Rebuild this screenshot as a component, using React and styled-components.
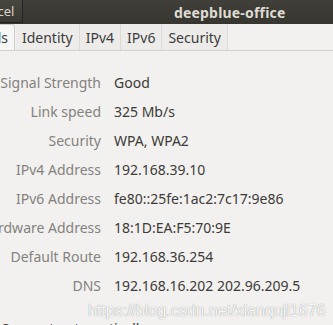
import React from 'react'
import styled, { createGlobalStyle } from 'styled-components'

const GlobalStyle = createGlobalStyle`
  html, body {
    margin: 0;
    padding: 0;
    background: #f2f1f0;
    overflow: hidden;
  }
`

const Window = styled.div`
  position: relative;
  width: 333px;
  height: 325px;
  overflow: hidden;
  background: #f2f1f0;
  font-family: "Noto Sans", "DejaVu Sans", sans-serif;
`

const TitleBar = styled.div`
  height: 24px;
  display: flex;
  align-items: stretch;
  background: linear-gradient(#403f3a, #36352f);
  color: #dfdbd2;
`

const CancelButton = styled.div`
  margin-left: -41px;
  margin-bottom: 1px;
  padding: 0 8px 0 14px;
  display: flex;
  align-items: center;
  border: 1px solid #24231f;
  border-top: 0;
  border-radius: 0 0 3px 3px;
  background: linear-gradient(#48473f, #3a3934);
  font-size: 13px;
  color: #d8d4cc;
`

const Title = styled.div`
  flex: 1;
  display: flex;
  align-items: center;
  justify-content: center;
  padding-left: 103px;
  font-weight: 700;
  font-size: 14px;
  letter-spacing: 0.2px;
`

const TabBar = styled.div`
  height: 26px;
  display: flex;
  border-bottom: 1px solid #d3d1cd;
`

const Tab = styled.div`
  display: flex;
  align-items: center;
  padding: 0 6px;
  font-size: 14px;
  color: #3c3c3c;
  background: ${p => (p.$active ? '#f7f7f6' : '#edecea')};
  border-right: 1px solid #dcdad6;
  ${p => p.$active && `
    border: 1px solid #cfcdc9;
    border-bottom: 0;
    border-radius: 0 3px 0 0;
    margin-right: 1px;
  `}
`

const ClippedTab = styled(Tab)`
  margin-left: -44px;
`

const InfoGrid = styled.div`
  display: grid;
  grid-template-columns: 101px 1fr;
  column-gap: 13px;
  grid-auto-rows: 29px;
  padding-top: 22px;
  font-size: 14px;
`

const Label = styled.div`
  justify-self: end;
  white-space: nowrap;
  color: #84827d;
`

const Value = styled.div`
  white-space: nowrap;
  color: #3c3b37;
`

const Footer = styled.div`
  margin-top: 14px;
  font-size: 14px;
  color: #3c3b37;
  white-space: nowrap;
`

const Watermark = styled.div`
  position: absolute;
  left: 88px;
  top: 302px;
  font-family: "Liberation Sans", Arial, sans-serif;
  font-size: 16px;
  color: rgba(255, 255, 255, 0.95);
  text-shadow: 0 0 1px rgba(100, 100, 100, 0.8);
  white-space: nowrap;
`

const rows = [
  ['Signal Strength', 'Good'],
  ['Link speed', '325 Mb/s'],
  ['Security', 'WPA, WPA2'],
  ['IPv4 Address', '192.168.39.10'],
  ['IPv6 Address', 'fe80::25fe:1ac2:7c17:9e86'],
  ['Hardware Address', '18:1D:EA:F5:70:9E'],
  ['Default Route', '192.168.36.254'],
  ['DNS', '192.168.16.202 202.96.209.5'],
]

const tabs = ['Identity', 'IPv4', 'IPv6', 'Security']

export default function App() {
  return (
    <Window>
      <GlobalStyle />
      <TitleBar>
        <CancelButton>Cancel</CancelButton>
        <Title>deepblue-office</Title>
      </TitleBar>
      <TabBar>
        <ClippedTab $active>Details</ClippedTab>
        {tabs.map(t => (
          <Tab key={t}>{t}</Tab>
        ))}
      </TabBar>
      <InfoGrid>
        {rows.map(([label, value]) => (
          <React.Fragment key={label}>
            <Label>{label}</Label>
            <Value>{value}</Value>
          </React.Fragment>
        ))}
      </InfoGrid>
      <Footer>Connect automatically</Footer>
      <Watermark>https://blog.csdn.net/xianquji1676</Watermark>
    </Window>
  )
}
